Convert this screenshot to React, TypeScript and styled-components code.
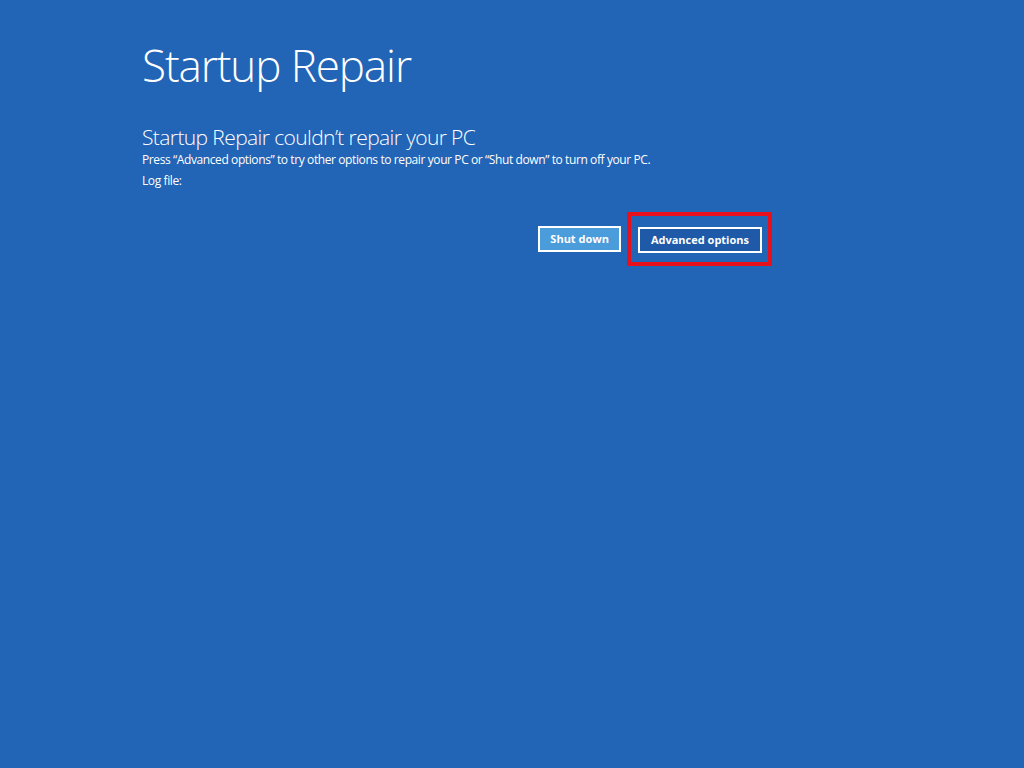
import React from 'react';
import styled, { createGlobalStyle } from 'styled-components';

const GlobalStyle = createGlobalStyle`
  html, body {
    margin: 0;
    padding: 0;
    background: #2264b6;
  }
  body {
    font-family: "Open Sans", "Noto Sans", "Liberation Sans", sans-serif;
    color: #ffffff;
  }
`;

const Screen = styled.main`
  width: 1024px;
  height: 768px;
  background: #2264b6;
  box-sizing: border-box;
  padding: 35px 0 0 142px;
  overflow: hidden;
`;

const Column = styled.div`
  width: 630px;
  display: flex;
  flex-direction: column;
`;

const Title = styled.h1`
  margin: 0;
  font-size: 44px;
  font-weight: 300;
  line-height: 60px;
  letter-spacing: -1.1px;
`;

const Heading = styled.h2`
  margin: 30px 0 0;
  font-size: 21px;
  font-weight: 300;
  line-height: 24px;
  letter-spacing: -0.6px;
`;

const Text = styled.p`
  margin: 0;
  font-size: 12px;
  line-height: 21px;
  letter-spacing: -0.4px;
`;

const ButtonRow = styled.div`
  margin-top: 21px;
  display: flex;
  justify-content: flex-end;
  align-items: center;
  gap: 6px;
`;

const Button = styled.button<{ $primary?: boolean }>`
  height: 26px;
  padding: 0 ${p => (p.$primary ? '11px' : '10px')};
  box-sizing: border-box;
  border: 2px solid #ffffff;
  background: ${p => (p.$primary ? '#1e5aa8' : '#4a9cdb')};
  color: #ffffff;
  font-family: "Open Sans", "Noto Sans", "Liberation Sans", sans-serif;
  font-size: 11px;
  font-weight: 700;
  line-height: 20px;
  cursor: pointer;
`;

const Highlight = styled.div`
  border: 4px solid #e8101c;
  padding: 11px 6px 9px 7px;
  display: flex;
`;

export default function App() {
  return (
    <Screen>
      <GlobalStyle />
      <Column>
        <Title>Startup Repair</Title>
        <Heading>Startup Repair couldn’t repair your PC</Heading>
        <Text>Press “Advanced options” to try other options to repair your PC or “Shut down” to turn off your PC.</Text>
        <Text>Log file:</Text>
        <ButtonRow>
          <Button>Shut down</Button>
          <Highlight>
            <Button $primary>Advanced options</Button>
          </Highlight>
        </ButtonRow>
      </Column>
    </Screen>
  );
}
